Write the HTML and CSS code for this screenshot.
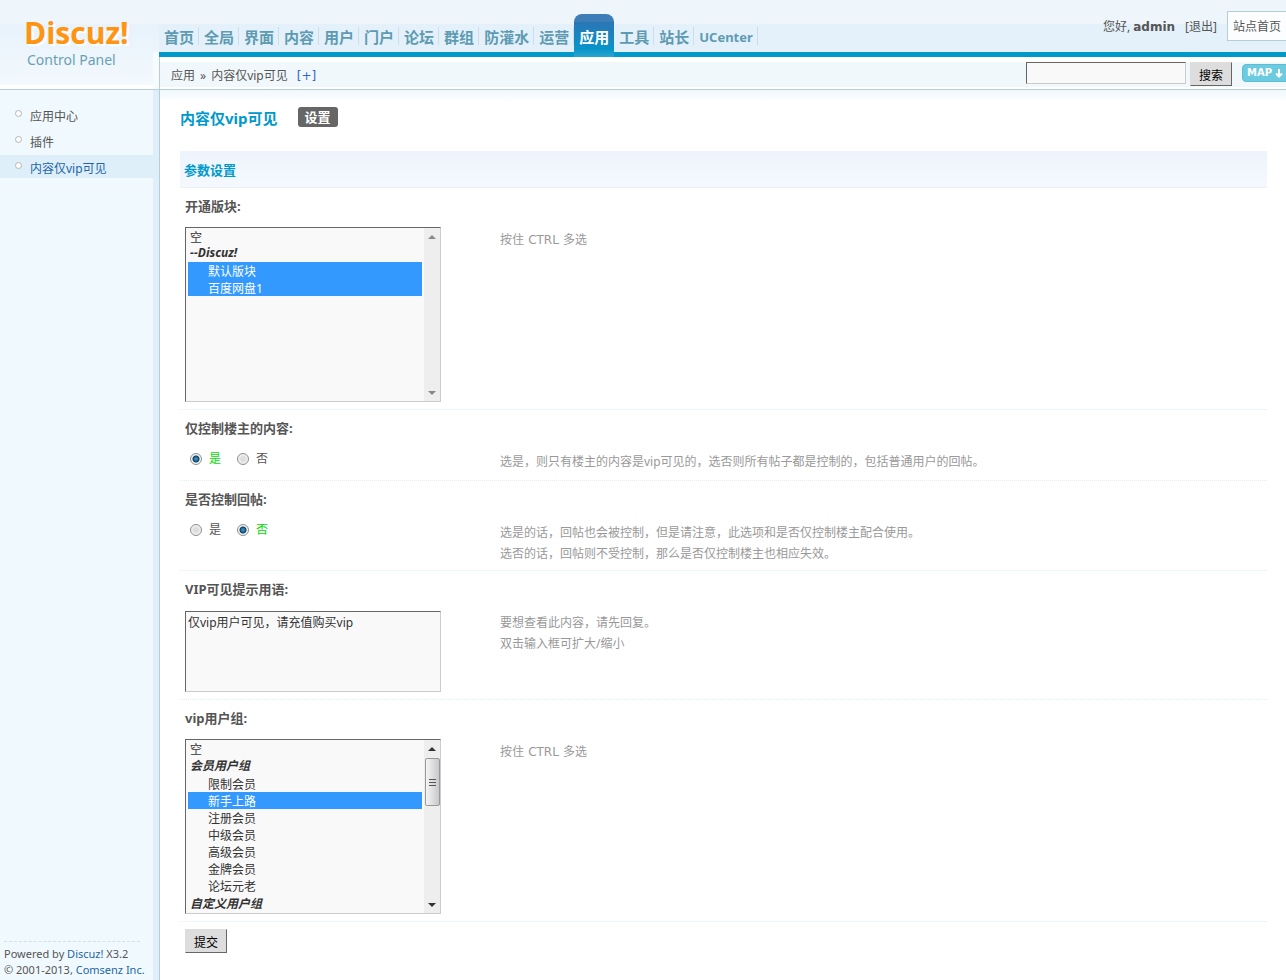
FILE: index.html
```html
<!DOCTYPE html>
<html lang="zh-CN">
<head>
  <meta charset="UTF-8" />
  <meta name="viewport" content="width=device-width, initial-scale=1.0"/>
  <title>Discuz! Control Panel</title>
  <link rel="stylesheet" href="styles.css">
</head>
<body>

  <header class="header">
    <a href="#" class="logo">
      <span class="logo-name">Discuz!</span>
      <span class="logo-sub">Control Panel</span>
    </a>

    <div class="header-main">
      <div class="topbar">
        <ul class="nav">
          <li><a href="#">首页</a></li>
          <li><a href="#">全局</a></li>
          <li><a href="#">界面</a></li>
          <li><a href="#">内容</a></li>
          <li><a href="#">用户</a></li>
          <li><a href="#">门户</a></li>
          <li><a href="#">论坛</a></li>
          <li><a href="#">群组</a></li>
          <li><a href="#">防灌水</a></li>
          <li><a href="#">运营</a></li>
          <li class="active"><a href="#">应用</a></li>
          <li><a href="#">工具</a></li>
          <li><a href="#">站长</a></li>
          <li class="latin"><a href="#">UCenter</a></li>
        </ul>
        <div class="user">
          <span>您好, <strong>admin</strong></span>
          <a href="#">[退出]</a>
          <a href="#" class="site-home">站点首页</a>
        </div>
      </div>

      <div class="subbar">
        <div class="crumbs">
          <span>应用</span><span class="sep">»</span><span>内容仅vip可见</span><a href="#" class="add">[+]</a>
        </div>
        <form class="search">
          <input type="text" aria-label="搜索">
          <button type="button" class="btn">搜索</button>
          <a href="#" class="map">MAP
            <svg width="8" height="9" viewBox="0 0 8 9"><path d="M4 0v7M1 4.5l3 3 3-3" fill="none" stroke="#fff" stroke-width="2"/></svg>
          </a>
        </form>
      </div>
    </div>
  </header>

  <div class="page">
    <aside class="sidebar">
      <ul class="menu">
        <li><a href="#">应用中心</a></li>
        <li><a href="#">插件</a></li>
        <li class="active"><a href="#">内容仅vip可见</a></li>
      </ul>
      <div class="copyright">
        <p>Powered by <a href="#">Discuz!</a> X3.2</p>
        <p>© 2001-2013, <a href="#">Comsenz Inc.</a></p>
      </div>
    </aside>

    <main class="content">
      <div class="title">
        <h1>内容仅vip可见</h1>
        <a href="#" class="tab">设置</a>
      </div>

      <form>
        <h2 class="section">参数设置</h2>

        <div class="row">
          <label class="row-title" for="forums">开通版块:</label>
          <div class="row-body">
            <div class="field">
              <div class="listbox">
                <select id="forums" multiple size="10">
                  <option class="none">空</option>
                  <optgroup label="--Discuz!">
                    <option selected>默认版块</option>
                    <option selected>百度网盘1</option>
                  </optgroup>
                </select>
                <div class="scrollbar disabled" aria-hidden="true">
                  <svg width="8" height="4" viewBox="0 0 8 4"><path d="M0 4l4-4 4 4z"/></svg>
                  <svg class="down" width="8" height="4" viewBox="0 0 8 4"><path d="M0 0l4 4 4-4z"/></svg>
                </div>
              </div>
            </div>
            <p class="tip">按住 <kbd>CTRL</kbd> 多选</p>
          </div>
        </div>

        <div class="row">
          <div class="row-title" id="owner-title">仅控制楼主的内容:</div>
          <div class="row-body">
            <div class="field radios" role="radiogroup" aria-labelledby="owner-title">
              <label><input type="radio" name="owner" checked><span>是</span></label>
              <label><input type="radio" name="owner"><span>否</span></label>
            </div>
            <p class="tip">选是，则只有楼主的内容是vip可见的，选否则所有帖子都是控制的，包括普通用户的回帖。</p>
          </div>
        </div>

        <div class="row">
          <div class="row-title" id="reply-title">是否控制回帖:</div>
          <div class="row-body">
            <div class="field radios" role="radiogroup" aria-labelledby="reply-title">
              <label><input type="radio" name="reply"><span>是</span></label>
              <label><input type="radio" name="reply" checked><span>否</span></label>
            </div>
            <p class="tip">选是的话，回帖也会被控制，但是请注意，此选项和是否仅控制楼主配合使用。<br>选否的话，回帖则不受控制，那么是否仅控制楼主也相应失效。</p>
          </div>
        </div>

        <div class="row">
          <label class="row-title" for="message">VIP可见提示用语:</label>
          <div class="row-body">
            <div class="field">
              <textarea id="message">仅vip用户可见，请充值购买vip</textarea>
            </div>
            <p class="tip">要想查看此内容，请先回复。<br>双击输入框可扩大/缩小</p>
          </div>
        </div>

        <div class="row">
          <label class="row-title" for="groups">vip用户组:</label>
          <div class="row-body">
            <div class="field">
              <div class="listbox">
                <select id="groups" multiple size="10">
                  <option class="none">空</option>
                  <optgroup label="会员用户组">
                    <option>限制会员</option>
                    <option selected>新手上路</option>
                    <option>注册会员</option>
                    <option>中级会员</option>
                    <option>高级会员</option>
                    <option>金牌会员</option>
                    <option>论坛元老</option>
                  </optgroup>
                  <optgroup label="自定义用户组"></optgroup>
                </select>
                <div class="scrollbar" aria-hidden="true">
                  <svg width="8" height="4" viewBox="0 0 8 4"><path d="M0 4l4-4 4 4z"/></svg>
                  <div class="thumb"></div>
                  <svg class="down" width="8" height="4" viewBox="0 0 8 4"><path d="M0 0l4 4 4-4z"/></svg>
                </div>
              </div>
            </div>
            <p class="tip">按住 <kbd>CTRL</kbd> 多选</p>
          </div>
        </div>

        <div class="submit">
          <button type="button" class="btn">提交</button>
        </div>
      </form>
    </main>
  </div>

</body>
</html>
```
FILE: styles.css
```css
* {
  box-sizing: border-box;
}

body {
  font-family: "Noto Sans", "Noto Sans CJK SC", sans-serif;
  font-size: 12px;
  line-height: 20px;
  color: #555;
  background-color: #fff;
  margin: 0;
  min-height: 100vh;
  display: flex;
  flex-direction: column;
  overflow-x: hidden;
}

ul, p, h1, h2 {
  margin: 0;
  padding: 0;
  list-style: none;
}

a {
  color: inherit;
  text-decoration: none;
}

button, input, select, textarea {
  font-family: inherit;
  font-size: 12px;
  margin: 0;
}

/* header */

.header {
  display: flex;
  height: 90px;
  overflow: hidden;
  border-bottom: 1px solid #b5cfd9;
  background: linear-gradient(#eef5fb 24px, #e4f1fa 24px, #e4f1fa 52px, #fff 52px);
}

.logo {
  width: 159px;
  flex-shrink: 0;
  padding: 14px 0 0 24px;
  display: flex;
  flex-direction: column;
  background:
    linear-gradient(#f8fbfe, #f8fbfe) right bottom / 6px 37px no-repeat,
    linear-gradient(#eef5fb 24px, #e7f2fb 25px, #f3f9fd 85px, #fff 85px);
}

.logo-name {
  font-family: "Open Sans", sans-serif;
  font-size: 30px;
  font-weight: bold;
  line-height: 38px;
  color: #ff9412;
  text-shadow: 1px 1px 0 #fff, 2px 2px 0 #fff;
}

.logo-sub {
  font-size: 14px;
  line-height: 16px;
  padding-left: 3px;
  color: #6aa0b4;
}

.header-main {
  flex: 1;
  min-width: 0;
}

.topbar {
  display: flex;
  justify-content: space-between;
  height: 57px;
  border-bottom: 5px solid #09c;
}

.nav {
  display: flex;
  align-items: flex-start;
  padding-top: 14px;
  font-size: 15px;
  font-weight: bold;
  color: #5e9bb2;
}

.nav li {
  height: 43px;
  padding: 13px 5px 0;
  position: relative;
  white-space: nowrap;
}

.nav li::after {
  content: "";
  position: absolute;
  right: 0;
  top: 13px;
  width: 1px;
  height: 18px;
  background-color: #c9dfea;
}

.nav .latin {
  font-size: 13px;
}

.nav .active {
  color: #fff;
  border-radius: 8px 8px 0 0;
  background: linear-gradient(#3d7eb8 8px, #2a76b5 8px, #0894ca 35px, #2aa6d0);
}

.nav .active::after {
  display: none;
}

.user {
  display: flex;
  align-items: flex-start;
  gap: 10px;
  padding-top: 11px;
  margin-right: -8px;
  line-height: 32px;
  white-space: nowrap;
}

.user strong {
  font-family: "DejaVu Sans", sans-serif;
}

.site-home {
  height: 30px;
  line-height: 30px;
  padding: 0 12px 0 5px;
  border: 1px solid #b5cfd9;
  background-color: #fbfdfe;
}

.subbar {
  display: flex;
  justify-content: space-between;
  height: 32px;
  padding-top: 5px;
  border-left: 1px solid #b5cfd9;
  background: linear-gradient(#fff 5px, #f0f8fc 5px, #f0f8fc 30px, #fff 30px);
}

.crumbs {
  padding-left: 11px;
  line-height: 28px;
}

.crumbs .sep {
  margin: 0 5px;
}

.crumbs .add {
  margin-left: 9px;
  color: #36c;
  font-family: "DejaVu Sans", sans-serif;
}

.search {
  display: flex;
  align-items: flex-start;
  margin-right: -4px;
}

.search input {
  width: 160px;
  height: 22px;
  margin-right: 4px;
  border: 1px solid;
  border-color: #666 #ccc #ccc #666;
  background-color: #f9f9f9;
}

.map {
  display: flex;
  align-items: center;
  gap: 3px;
  height: 18px;
  margin: 2px 0 0 10px;
  width: 48px;
  padding-left: 4px;
  border: 1px solid #5bbdd6;
  border-radius: 4px;
  background-color: #6ccbdf;
  color: #fff;
  font-family: "DejaVu Sans", sans-serif;
  font-size: 10px;
  font-weight: bold;
}

.btn {
  width: 42px;
  height: 24px;
  padding: 1px 0 0;
  color: #000;
  border: 1px solid;
  border-color: #ddd #666 #666 #ddd;
  border-radius: 0;
  background-color: #ddd;
}

/* left menu */

.page {
  flex: 1;
  display: flex;
}

.sidebar {
  width: 160px;
  flex-shrink: 0;
  display: flex;
  flex-direction: column;
  justify-content: space-between;
  border-right: 1px solid #b5cfd9;
  background: linear-gradient(to right, #f0f9fd 153px, #deeffa 153px);
}

.menu {
  padding-top: 13px;
  margin-right: 6px;
}

.menu li {
  height: 23px;
  line-height: 28px;
  margin-bottom: 3px;
  padding-left: 15px;
  display: flex;
  gap: 8px;
}

.menu li::before {
  content: "";
  width: 7px;
  height: 7px;
  margin-top: 7px;
  border: 1px solid #b5b5b5;
  border-radius: 50%;
  background-color: #fff;
  box-sizing: border-box;
}

.menu .active {
  color: #2366a8;
  background-color: #deeffa;
}

.copyright {
  margin: 0 19px 2px 4px;
  padding-top: 4px;
  border-top: 1px dashed #cfe0e8;
  font-size: 11px;
  line-height: 16px;
  white-space: nowrap;
}

.copyright a {
  color: #2366a8;
}

/* settings form */

.content {
  flex: 1;
  min-width: 0;
  padding: 17px 19px 20px 20px;
  background: linear-gradient(#f0f8fc, #fff 12px);
}

.title {
  display: flex;
  align-items: flex-start;
  gap: 20px;
  height: 44px;
}

.title h1 {
  font-size: 15px;
  line-height: 22px;
  color: #09c;
}

.tab {
  width: 40px;
  height: 20px;
  border-radius: 3px;
  text-align: center;
  font-size: 13px;
  font-weight: bold;
  line-height: 20px;
  color: #fff;
  background-color: #666;
}

.section {
  height: 37px;
  padding-left: 4px;
  font-size: 13px;
  line-height: 38px;
  color: #09c;
  border-bottom: 1px dotted #deeffa;
  background: linear-gradient(#edf4fc, #f5f9fe);
}

.row {
  padding: 8px 0 7px 5px;
  border-bottom: 1px dotted #deeffa;
}

.row-title {
  display: block;
  font-size: 13px;
  font-weight: bold;
  line-height: 20px;
  margin-bottom: 11px;
}

.row-body {
  display: flex;
  min-height: 24px;
}

.field {
  width: 315px;
  flex-shrink: 0;
}

.tip {
  padding-top: 2px;
  margin-bottom: -1px;
  line-height: 21px;
  color: #999;
}

.tip kbd {
  margin: 0 1px;
  font-family: "DejaVu Sans", sans-serif;
}

.listbox,
textarea {
  width: 256px;
  border: 1px solid;
  border-color: #666 #ccc #ccc #666;
  background-color: #f9f9f9;
}

.listbox {
  display: flex;
  height: 175px;
}

select {
  flex: 1;
  min-width: 0;
  height: 173px;
  padding: 0 2px;
  border: 0;
  border-radius: 0;
  outline: none;
  color: #333;
  background-color: #f9f9f9;
}

select option {
  height: 17px;
  min-height: 16px;
  line-height: 17px;
  padding: 0 2px;
}

select .none {
  height: 16px;
}

optgroup {
  font-weight: bold;
  font-style: italic;
}

optgroup option {
  padding-left: 20px;
  font-weight: normal;
  font-style: normal;
}

option:checked {
  color: #fff;
  background: #39f linear-gradient(#39f, #39f);
}

.scrollbar {
  width: 16px;
  padding: 7px 0 6px;
  display: flex;
  flex-direction: column;
  align-items: center;
  background-color: #eee;
  fill: #333;
}

.scrollbar.disabled {
  fill: #888;
}

.scrollbar .down {
  margin-top: auto;
}

.thumb {
  width: 15px;
  height: 48px;
  margin-top: 7px;
  border: 1px solid #999;
  border-radius: 2px;
  background:
    repeating-linear-gradient(#555 0, #555 1px, transparent 1px, transparent 3px) center / 7px 7px no-repeat,
    linear-gradient(to right, #f5f5f5, #c8c8cc);
}

textarea {
  display: block;
  height: 81px;
  margin-top: 1px;
  padding: 2px;
  line-height: 18px;
  border-radius: 0;
  color: #333;
  outline: none;
  resize: none;
}

.radios {
  display: flex;
  align-items: flex-start;
  padding-left: 5px;
}

.radios label {
  display: flex;
  align-items: center;
  gap: 7px;
  width: 47px;
}

.radios input {
  appearance: none;
  width: 12px;
  height: 12px;
  border: 1px solid #8a8f94;
  border-radius: 50%;
  background: radial-gradient(#ddd 2px, #f4f4f4 5px);
}

.radios input:checked {
  background: radial-gradient(#2d8fc4 1px, #123c5c 3px, #f4f4f4 4px);
}

.radios input:checked + span {
  color: #0d0;
}

.submit {
  padding: 7px 0 0 5px;
}
```
